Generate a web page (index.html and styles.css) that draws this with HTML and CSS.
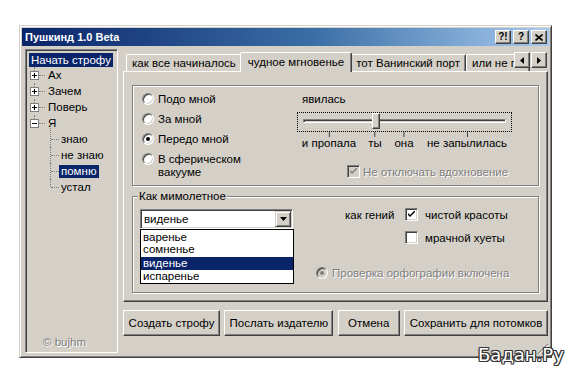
FILE: index.html
```html
<!DOCTYPE html>
<html lang="ru">
<head>
<meta charset="utf-8">
<title>Пушкинд 1.0 Beta</title>
<link rel="stylesheet" href="styles.css">
</head>
<body>
<div class="page">
  <div class="window">
    <div class="titlebar">
      <span class="title">Пушкинд 1.0 Beta</span>
      <div class="tbtns">
        <span class="tbtn">?!</span>
        <span class="tbtn">?</span>
        <span class="tbtn"><svg width="8" height="7" viewBox="0 0 8 7"><path d="M0.5 0.5 L7.5 6.5 M7.5 0.5 L0.5 6.5" stroke="#000" stroke-width="1.6"/></svg></span>
      </div>
    </div>
    <div class="main">
      <div class="leftpanel">
        <ul class="tree">
          <li class="node first"><span class="lbl hl">Начать строфу</span></li>
          <li class="node root"><span class="exp plus"></span><span class="hline"></span><span class="lbl">Ах</span></li>
          <li class="node root"><span class="exp plus"></span><span class="hline"></span><span class="lbl">Зачем</span></li>
          <li class="node root"><span class="exp plus"></span><span class="hline"></span><span class="lbl">Поверь</span></li>
          <li class="node root"><span class="exp"></span><span class="hline"></span><span class="lbl">Я</span></li>
          <li class="node child first-child"><span class="lbl">знаю</span></li>
          <li class="node child"><span class="lbl">не знаю</span></li>
          <li class="node child"><span class="lbl hl">помню</span></li>
          <li class="node child last"><span class="lbl">устал</span></li>
        </ul>
        <div class="copy">© bujhm</div>
      </div>
      <div class="rightcol">
        <div class="tabstrip">
          <div class="tab">как все начиналось</div>
          <div class="tab sel">чудное мгновенье</div>
          <div class="tab">тот Ванинский порт</div>
          <div class="tab last">или не помню</div>
          <div class="tabscroll">
            <span class="sbtn"><svg width="4" height="7" viewBox="0 0 4 7"><path d="M4 0 L0 3.5 L4 7 Z" fill="#000"/></svg></span>
            <span class="sbtn"><svg width="4" height="7" viewBox="0 0 4 7"><path d="M0 0 L4 3.5 L0 7 Z" fill="#000"/></svg></span>
          </div>
        </div>
        <div class="tabpanel">
          <div class="group group1">
            <div class="radios">
              <div class="radiorow"><span class="radio"></span><span>Подо мной</span></div>
              <div class="radiorow"><span class="radio"></span><span>За мной</span></div>
              <div class="radiorow"><span class="radio on"></span><span>Передо мной</span></div>
              <div class="radiorow two"><span class="radio"></span><span>В сферическом<br>вакууме</span></div>
            </div>
            <div class="slidercol">
              <div class="slabel">явилась</div>
              <div class="slider">
                <div class="track"></div>
                <div class="thumb" style="left:74px"></div>
              </div>
              <div class="scale">
                <div class="mark" style="left:32px"><span class="tick"></span><span>и пропала</span></div>
                <div class="mark" style="left:78px"><span class="tick"></span><span>ты</span></div>
                <div class="mark" style="left:107px"><span class="tick"></span><span>она</span></div>
                <div class="mark" style="left:170px"><span class="tick"></span><span>не запылилась</span></div>
              </div>
              <div class="chkrow disabled">
                <span class="check dis"><svg width="7" height="7" viewBox="0 0 7 7"><path d="M0 2 L2 4 L7 -1 L7 1 L2 6 L0 4 Z" fill="#808080"/></svg></span>
                <span class="dtext">Не отключать вдохновение</span>
              </div>
            </div>
          </div>
          <div class="group group2">
            <span class="gtitle">Как мимолетное</span>
            <div class="combocol">
              <div class="combo">
                <span class="cval">виденье</span>
                <span class="cbtn"><svg width="7" height="4" viewBox="0 0 7 4"><path d="M0 0 L7 0 L3.5 4 Z" fill="#000"/></svg></span>
                <ul class="dropdown">
                  <li class="ditem">варенье</li>
                  <li class="ditem">сомненье</li>
                  <li class="ditem sel">виденье</li>
                  <li class="ditem">испаренье</li>
                </ul>
              </div>
            </div>
            <div class="optcol">
              <div class="optrow r1">
                <span class="pre">как гений</span>
                <span class="check"><svg width="7" height="7" viewBox="0 0 7 7"><path d="M0 2 L2 4 L7 -1 L7 1 L2 6 L0 4 Z" fill="#000"/></svg></span>
                <span class="otext">чистой красоты</span>
              </div>
              <div class="optrow r2">
                <span class="check"></span>
                <span class="otext">мрачной хуеты</span>
              </div>
              <div class="optrow r3">
                <span class="radio on dis"></span>
                <span class="dtext">Проверка орфографии включена</span>
              </div>
            </div>
          </div>
        </div>
        <div class="buttons">
          <button class="btn b1">Создать строфу</button>
          <button class="btn b2">Послать издателю</button>
          <button class="btn b3">Отмена</button>
          <button class="btn b4">Сохранить для потомков</button>
        </div>
      </div>
    </div>
    <svg class="grip" width="12" height="12" viewBox="0 0 12 12">
      <path d="M11 1 L1 11 M11 5 L5 11 M11 9 L9 11" stroke="#808080" stroke-width="1.2"/>
      <path d="M11 2 L2 11 M11 6 L6 11 M11 10 L10 11" stroke="#fff" stroke-width="1"/>
    </svg>
  </div>
  <div class="watermark">Бадан.Ру</div>
</div>
</body>
</html>
```
FILE: styles.css
```css
* { box-sizing: border-box; }
html, body { margin: 0; background: #fff; }
body {
  font-family: "Liberation Sans", Arial, sans-serif;
  font-size: 11.5px;
  color: #000;
}
ul { list-style: none; margin: 0; padding: 0; }

.page { position: relative; height: 383px; padding: 25px 0 0 19px; }

.window {
  position: relative;
  width: 533px;
  height: 333px;
  background: #d4d0c8;
  border: 1px solid;
  border-color: #d4d0c8 #404040 #404040 #d4d0c8;
  box-shadow: inset 1px 1px #fff, inset -1px -1px #808080;
  padding: 2px;
  display: flex;
  flex-direction: column;
}

/* title bar */
.titlebar {
  height: 18px;
  flex: none;
  display: flex;
  align-items: center;
  justify-content: space-between;
  padding: 0 2px 0 3px;
  background: linear-gradient(to right, #0a246a 0%, #3a6ea5 55%, #a6caf0 100%);
}
.title { color: #fff; font-weight: bold; font-size: 11px; }
.tbtns { display: flex; gap: 2px; }
.tbtn {
  width: 16px; height: 14px;
  display: flex; align-items: center; justify-content: center;
  background: #d4d0c8;
  border: 1px solid;
  border-color: #fff #404040 #404040 #fff;
  box-shadow: inset -1px -1px #808080;
  font-weight: bold; font-size: 10px; line-height: 1;
}

.main { flex: 1; display: flex; padding: 3px 0 2px 3px; gap: 5px; min-height: 0; }

/* left tree panel */
.leftpanel {
  width: 93px;
  flex: none;
  display: flex;
  flex-direction: column;
  justify-content: space-between;
  border: 1px solid;
  border-color: #808080 #fff #fff #808080;
  box-shadow: inset 1px 1px #404040, inset -1px -1px #d4d0c8;
  padding: 2px 1px 4px 1px;
}
.tree { padding-top: 1px; }
.node { height: 16px; display: flex; align-items: center; position: relative; white-space: nowrap; }
.node.first { height: 14px; padding-left: 2px; }
.lbl { display: inline-block; line-height: 13px; padding: 0 2px; }
.node.first .lbl { line-height: 14px; }
.hl { background: #0a246a; color: #fff; }
.node.root { padding-left: 3px; }
.node.root::before {
  content: ""; position: absolute; left: 7px; top: 0; height: 4px;
  border-left: 1px dotted #808080;
}
.exp {
  width: 9px; height: 9px; flex: none; position: relative;
  border: 1px solid #808080; background: #fff;
}
.exp::before {
  content: ""; position: absolute; left: 1px; top: 3px; width: 5px; height: 1px; background: #000;
}
.exp.plus::after {
  content: ""; position: absolute; left: 3px; top: 1px; width: 1px; height: 5px; background: #000;
}
.hline { width: 6px; border-top: 1px dotted #808080; margin-right: 1px; }
.node.child { padding-left: 32px; }
.node.child::before {
  content: ""; position: absolute; left: 23px; top: 0; bottom: 0;
  border-left: 1px dotted #808080;
}
.node.child.first-child::before { top: -6px; }
.node.child.last::before { bottom: 8px; }
.node.child::after {
  content: ""; position: absolute; left: 24px; top: 8px; width: 8px;
  border-top: 1px dotted #808080;
}
.copy { padding-left: 16px; line-height: 12px; color: #808080; text-shadow: 1px 1px #fff; }

/* right column */
.rightcol { width: 425px; flex: none; display: flex; flex-direction: column; }

.tabstrip {
  position: relative;
  height: 19px;
  margin-top: 3px;
  padding-left: 3px;
  display: flex;
  align-items: flex-end;
  flex: none;
}
.tab {
  height: 17px;
  padding: 0 5px;
  line-height: 16px;
  white-space: nowrap;
  background: #d4d0c8;
  border: 1px solid;
  border-bottom: none;
  border-color: #fff #404040 transparent #fff;
  border-radius: 2px 2px 0 0;
  box-shadow: inset -1px 0 #808080;
}
.tab.sel {
  height: 20px;
  line-height: 19px;
  margin: 0 -2px -1px;
  padding: 0 7px;
  position: relative;
  z-index: 1;
}
.tab.last { width: 64px; overflow: hidden; }
.tabscroll { position: absolute; right: 1px; top: 0; display: flex; gap: 1px; z-index: 2; }
.sbtn {
  width: 16px; height: 16px;
  display: flex; align-items: center; justify-content: center;
  background: #d4d0c8;
  border: 1px solid;
  border-color: #fff #404040 #404040 #fff;
  box-shadow: inset -1px -1px #808080;
}

.tabpanel {
  height: 231px;
  flex: none;
  border: 1px solid;
  border-color: #fff #404040 #404040 #fff;
  box-shadow: inset -1px -1px #808080;
  padding: 13px 8px 0 8px;
}

.group {
  border: 1px solid #808080;
  box-shadow: inset 1px 1px #fff, 1px 1px #fff;
}
.group1 { height: 101px; display: flex; padding: 3px 0 0 9px; }
.radios { width: 155px; flex: none; }
.radiorow { height: 20px; display: flex; align-items: flex-start; gap: 4px; padding-top: 4px; line-height: 12px; }
.radiorow.two { line-height: 12.5px; }

.radio {
  width: 12px; height: 12px; flex: none; position: relative;
  border-radius: 50%;
  background: #fff;
  border: 1px solid;
  border-color: #808080 #fff #fff #808080;
  box-shadow: inset 1px 1px #404040, inset -1px -1px #d4d0c8;
}
.radio.on::after {
  content: ""; position: absolute; left: 3px; top: 3px; width: 4px; height: 4px;
  border-radius: 50%; background: #000;
}
.radio.dis { background: #d4d0c8; }
.radio.dis::after { background: #808080; }

.check {
  width: 13px; height: 13px; flex: none;
  display: flex; align-items: center; justify-content: center;
  background: #fff;
  border: 1px solid;
  border-color: #808080 #fff #fff #808080;
  box-shadow: inset 1px 1px #404040, inset -1px -1px #d4d0c8;
}
.check.dis { background: #d4d0c8; }
.dtext { color: #808080; text-shadow: 1px 1px #fff; }

.slidercol { width: 215px; flex: none; padding-top: 4px; }
.slabel { line-height: 12px; padding-left: 5px; }
.slider {
  position: relative;
  height: 20px;
  margin-top: 7px;
  border: 1px dotted #000;
  padding: 6px 5px 0 5px;
}
.track {
  height: 4px;
  border: 1px solid;
  border-color: #808080 #fff #fff #808080;
  box-shadow: inset 1px 1px #404040;
  background: #d4d0c8;
}
.thumb {
  position: absolute;
  top: 0;
  width: 8px; height: 16px;
  background: #d4d0c8;
  border: 1px solid;
  border-color: #fff #404040 #404040 #fff;
  box-shadow: inset -1px -1px #808080;
}
.scale { position: relative; height: 17px; }
.mark {
  position: absolute; top: 0;
  transform: translateX(-50%);
  display: flex; flex-direction: column; align-items: center;
  white-space: nowrap; line-height: 12px;
}
.tick { width: 1px; height: 5px; background: #404040; }
.chkrow { display: flex; align-items: center; gap: 3px; margin-top: 16px; margin-left: 50px; line-height: 12px; }

.group2 { position: relative; height: 97px; margin-top: 10px; display: flex; padding: 12px 0 0 7px; }
.gtitle {
  position: absolute; top: -7px; left: 5px;
  padding: 0 1px; line-height: 13px;
  background: #d4d0c8;
}
.combocol { width: 153px; flex: none; }
.combo {
  position: relative;
  height: 20px;
  display: flex; align-items: center; justify-content: space-between;
  background: #fff;
  border: 1px solid;
  border-color: #808080 #fff #fff #808080;
  box-shadow: inset 1px 1px #404040, inset -1px -1px #d4d0c8;
  padding: 1px 1px 1px 3px;
}
.cbtn {
  width: 16px; height: 16px;
  display: flex; align-items: center; justify-content: center;
  background: #d4d0c8;
  border: 1px solid;
  border-color: #d4d0c8 #404040 #404040 #d4d0c8;
  box-shadow: inset 1px 1px #fff, inset -1px -1px #808080;
}
.dropdown {
  position: absolute;
  left: -1px; top: 19px;
  width: 154px;
  background: #fff;
  border: 1px solid #000;
  padding-top: 1px;
  z-index: 3;
}
.ditem { line-height: 12px; padding-left: 2px; }
.ditem.sel { background: #0a246a; color: #fff; line-height: 13px; margin-top: 2px; }
.ditem:last-child { line-height: 13px; }

.optcol { margin-left: 23px; flex: 1; }
.optrow { display: flex; align-items: center; line-height: 12px; }
.optrow.r1 { margin-top: -1px; margin-left: 29px; height: 13px; }
.pre { width: 60px; }
.optrow .otext { margin-left: 7px; }
.optrow.r2 { margin-top: 10px; margin-left: 89px; height: 13px; }
.optrow.r3 { margin-top: 23px; height: 12px; gap: 4px; }

/* bottom buttons */
.buttons { display: flex; justify-content: space-between; margin-top: 8px; }
.btn {
  height: 26px;
  font: inherit;
  color: #000;
  background: #d4d0c8;
  border: 1px solid;
  border-color: #fff #404040 #404040 #fff;
  box-shadow: inset -1px -1px #808080;
  padding: 0;
  white-space: nowrap;
}
.b1 { width: 97px; }
.b2 { width: 109px; }
.b3 { width: 62px; }
.b4 { width: 144px; }

.grip { position: absolute; right: 2px; bottom: 2px; }

.watermark {
  position: absolute;
  left: 478px; top: 345px;
  font-family: "DejaVu Sans", sans-serif;
  font-size: 18px;
  line-height: 20px;
  color: #fff;
  text-shadow: -1px -1px 0 #333, 1px -1px 0 #333, -1px 1px 0 #333, 1px 1px 0 #333,
               0 -1px 0 #333, 0 1px 0 #333, -1px 0 0 #333, 1px 0 0 #333;
}
```
